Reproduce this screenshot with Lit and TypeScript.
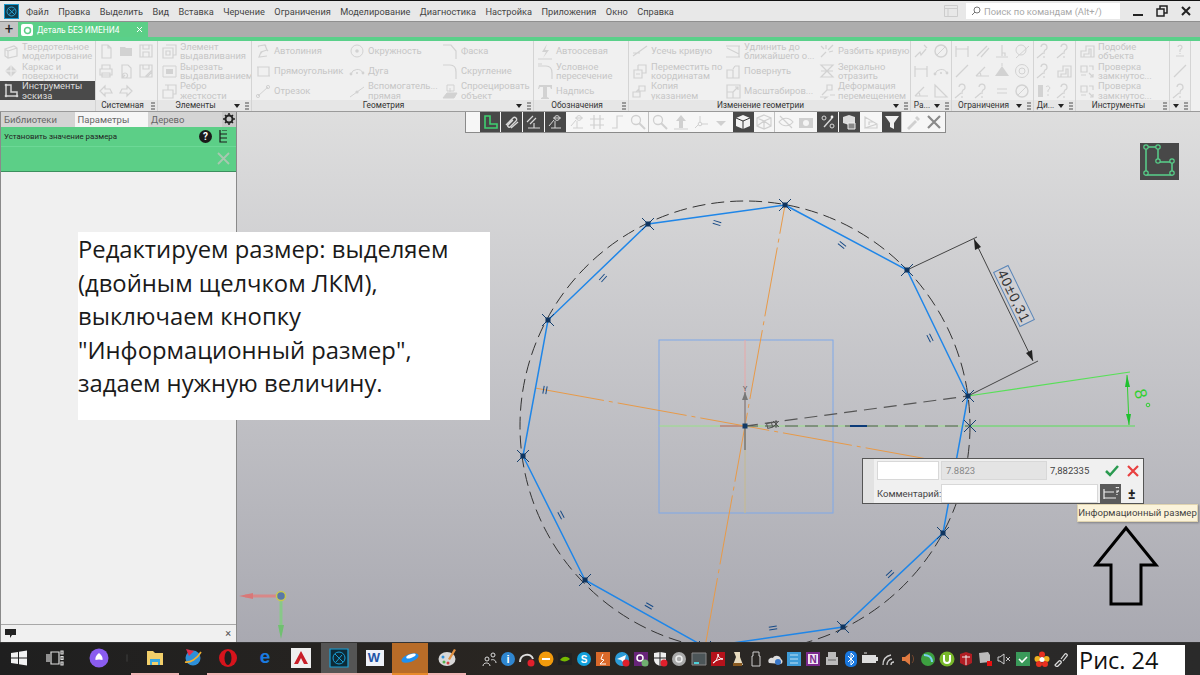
import { css, html, svg, LitElement } from 'lit';
import { customElement } from 'lit/decorators.js';

const st = (d: string) => svg`<path d=${d} fill="none" stroke="currentColor" stroke-width="1.2"/>`;

// faded ribbon icons, 18x18
const ICONS: Record<string, unknown> = {
  cube: st('M3 7l9-3 3 2v8l-9 2-3-2zM3 7l3 2v7M6 9l9-3'),
  frame: svg`<path d="M9 3l6 6-6 6-6-6z" fill="currentColor"/><path d="M9 3v12M3 9h12" stroke="#f0f0f0" fill="none"/>`,
  sketch: svg`<path d="M4 3v11h11v-4h-6v-7z" fill="none" stroke="currentColor" stroke-width="1.5"/><circle cx="4" cy="3" r="1.3" fill="currentColor"/><circle cx="4" cy="14" r="1.3" fill="currentColor"/><circle cx="15" cy="14" r="1.3" fill="currentColor"/>`,
  doc: st('M5 3h6l3 3v10h-9zM11 3v3h3'),
  folder: svg`<path d="M3 5h5l1 1h6v8h-12z" fill="currentColor"/>`,
  save: st('M3 3h12v12h-12zM6 3v4h6v-4M6 15v-5h6v5'),
  print: st('M5 7v-4h8v4M3 7h12v6h-12zM5 11h8v4h-8z'),
  preview: st('M5 3h6l3 3v10h-9zM8 11a2.5 2.5 0 1 0 .1 0M6 15l2-2'),
  saveas: st('M3 3h12v12h-12zM6 3v4h6v-4M9 14l5-5 1 1-5 5z'),
  undo: st('M8 4l-5 5 5 5v-3h7l-2-4h-5z'),
  redo: st('M10 4l5 5-5 5v-3h-7l2-4h5z'),
  extr: st('M6 3h10v10h-3M3 6h10v10h-10zM6 9h4v4h-4z'),
  cut: svg`<path d="M3 4h13v11h-13z" fill="none" stroke="currentColor"/><path d="M6 7h7v5h-7z" fill="currentColor"/>`,
  rib: st('M5 3h11v9h-3M3 8h10v8h-10zM8 8v-5'),
  auto: st('M4 4l7-1 2 5-6 2-2 5 8-1M4 4l1 1M11 3l1 1M13 8l1 1M7 10l1 1'),
  rect: st('M4 5h11v9h-11zM3 5h2M14 14h2'),
  seg: svg`<path d="M4 14l10-9" stroke="currentColor"/><circle cx="4" cy="14" r="1.6" fill="none" stroke="currentColor"/><circle cx="14" cy="5" r="1.6" fill="none" stroke="currentColor"/>`,
  circle: svg`<circle cx="9" cy="9" r="6" fill="none" stroke="currentColor"/><circle cx="9" cy="9" r="1.8" fill="currentColor"/>`,
  arc: svg`<path d="M3 12a6.5 6.5 0 0 1 12-1" fill="none" stroke="currentColor"/><circle cx="3" cy="12" r="1.4" fill="currentColor"/><circle cx="15" cy="11" r="1.4" fill="currentColor"/><circle cx="9" cy="11" r="1" fill="currentColor"/>`,
  aux: svg`<path d="M2 15l14-10" stroke="currentColor"/><circle cx="9" cy="10" r="1.6" fill="currentColor"/>`,
  chamfer: st('M2 3h8l5 6v8'),
  fillet: st('M2 3h7c4 0 6 3 6 7v7'),
  project: svg`<path d="M6 3h7v6h-7z" fill="none" stroke="currentColor"/><path d="M9 6v4M2 16l4-5h10l-3 5z" fill="currentColor" stroke="currentColor"/>`,
  axis: svg`<path d="M11 2l-5 8h4l-3 6 6-8h-4z" fill="currentColor"/><path d="M2 17h14" stroke="currentColor"/>`,
  cross: st('M2 4h8c4 0 6 3 6 7v6M2 2h4'),
  tt: svg`<path d="M3 3h13v4h-1l-1-2h-3v10l2 1v1h-8v-1l2-1v-10h-3l-1 2h-1z" fill="currentColor"/>`,
  trim: st('M2 14l14-10M2 11h7'),
  move: st('M3 8h8v8h-8zM7 3h8v8h-4M7 3v5M5 12h4'),
  copy: st('M2 10h7v5h-7zM8 4h6v5h-6zM5 10l3-3'),
  extend: st('M2 4h14M3 6l12 6M2 15h14M15 4v11'),
  rotate: st('M3 8h6v8h-6zM11 4h4v12h-6M11 4l-2 3'),
  scale: st('M3 3h13v13h-13zM3 10h6v6M9 10l5-5M11 5h3v3'),
  split: st('M3 15l5-5M10 8l5-5M8 3v4M15 9l-4 1M3 4l3 3'),
  mirror: st('M3 3h12l-12 12h12zM3 9h12'),
  deform: st('M2 15h7l-3 2M9 3h5v5h-5zM4 13l5-5M12 13h5'),
  similar: st('M3 15v-6h5v-5h8v11zM6 15v-3h5v-5h2v8'),
  check: st('M3 4h6v6h-6zM11 4h4v4M3 13h5M11 11l4 4M12 15h3v-3'),
  grid1: st('M3 15l5-5 1 3 5-6M12 3l3 3'),
  no: svg`<circle cx="9" cy="9" r="6" fill="none" stroke="currentColor" stroke-width="1.4"/><path d="M5 13l8-8" stroke="currentColor"/>`,
  par: st('M4 14l10-10M8 15l8-9'),
  perp: st('M9 3v11M3 15h12M9 11h3v3'),
  tan: svg`<circle cx="8" cy="8" r="5" fill="none" stroke="currentColor"/><path d="M3 16l13-12" stroke="currentColor"/>`,
  line: st('M3 15l12-12'),
  angle: st('M3 14h13M3 14l9-9M8 14a5 5 0 0 0-2-4'),
  hatch: svg`<path d="M9 4l7 10h-14z" fill="currentColor"/><path d="M9 1v3" stroke="currentColor"/>`,
  conc: svg`<circle cx="9" cy="9" r="6.5" fill="none" stroke="currentColor"/><circle cx="9" cy="9" r="3" fill="none" stroke="currentColor"/>`,
  eq: st('M4 7h10M4 11h10'),
  tri: st('M3 15v-12l12 12z'),
  qu: st('M6 5a3 3 0 1 1 4 3l-1 2v2M9 14v2M2 16l6-5'),
  dim: st('M3 4v11M15 4v11M3 7h12'),
  bars: svg`<path d="M3 3h5v12h-5z" fill="currentColor"/><path d="M11 5a2 2 0 1 1 2 3v2M13 12v2" fill="none" stroke="currentColor"/>`,
  ask: st('M5 14h8M7 5a2 2 0 1 1 3 2l-1 1v2M9 11v1'),
};

type Item = { i: string; l?: string[] };
type Section = { w: number; cap?: string; caret?: boolean; grip?: boolean; cols: string; items: Item[] };

const ic = (...names: string[]): Item[] => names.map((i) => ({ i }));

const SECTIONS: Section[] = [
  { w: 96, cols: '95px', items: [
    { i: 'cube', l: ['Твердотельное', 'моделирование'] },
    { i: 'frame', l: ['Каркас и', 'поверхности'] },
  ] },
  { w: 62, cap: 'Системная', grip: true, cols: 'repeat(3, 20px)', items: ic('doc', 'print', 'undo', 'folder', 'preview', 'redo', 'save', 'saveas') },
  { w: 94, cap: 'Элементы', caret: true, grip: true, cols: '93px', items: [
    { i: 'extr', l: ['Элемент', 'выдавливания'] },
    { i: 'cut', l: ['Вырезать', 'выдавливанием'] },
    { i: 'rib', l: ['Ребро', 'жесткости'] },
  ] },
  { w: 282, cap: 'Геометрия', caret: true, grip: true, cols: '94px 93px 94px', items: [
    { i: 'auto', l: ['Автолиния'] }, { i: 'rect', l: ['Прямоугольник'] }, { i: 'seg', l: ['Отрезок'] },
    { i: 'circle', l: ['Окружность'] }, { i: 'arc', l: ['Дуга'] }, { i: 'aux', l: ['Вспомогатель...', 'прямая'] },
    { i: 'chamfer', l: ['Фаска'] }, { i: 'fillet', l: ['Скругление'] }, { i: 'project', l: ['Спроецировать', 'объект'] },
  ] },
  { w: 95, cap: 'Обозначения', grip: true, cols: '94px', items: [
    { i: 'axis', l: ['Автоосевая'] }, { i: 'cross', l: ['Условное', 'пересечение'] }, { i: 'tt', l: ['Надпись'] },
  ] },
  { w: 282, cap: 'Изменение геометрии', caret: true, grip: true, cols: '93px 94px 94px', items: [
    { i: 'trim', l: ['Усечь кривую'] }, { i: 'move', l: ['Переместить по', 'координатам'] }, { i: 'copy', l: ['Копия', 'указанием'] },
    { i: 'extend', l: ['Удлинить до', 'ближайшего о...'] }, { i: 'rotate', l: ['Повернуть'] }, { i: 'scale', l: ['Масштабиров...'] },
    { i: 'split', l: ['Разбить кривую'] }, { i: 'mirror', l: ['Зеркально', 'отразить'] }, { i: 'deform', l: ['Деформация', 'перемещением'] },
  ] },
  { w: 41, cap: 'Ра...', caret: true, grip: true, cols: 'repeat(2, 20px)', items: ic('grid1', 'dim', 'angle', 'no', 'arc', 'tri') },
  { w: 82, cap: 'Ограничения', caret: true, grip: true, cols: 'repeat(4, 20px)', items: ic('dim', 'line', 'qu', 'par', 'angle', 'qu', 'perp', 'hatch', 'eq', 'tan', 'conc', 'no') },
  { w: 42, cap: 'Ди...', caret: true, grip: true, cols: 'repeat(2, 20px)', items: ic('qu', 'qu', 'bars', 'qu', 'similar', 'qu') },
  { w: 94, cap: 'Инструменты', grip: true, cols: '93px', items: [
    { i: 'similar', l: ['Подобие', 'объекта'] }, { i: 'check', l: ['Проверка', 'замкнутос...'] }, { i: 'check', l: ['Проверка', 'замкнутос...'] },
  ] },
  { w: 21, caret: true, grip: true, cols: '20px', items: ic('ask', 'line', 'qu') },
];

const MENU = ['Файл', 'Правка', 'Выделить', 'Вид', 'Вставка', 'Черчение', 'Ограничения', 'Моделирование', 'Диагностика', 'Настройка', 'Приложения', 'Окно', 'Справка'];

// floating view toolbar; d = dark pressed button
const TB: { k: string; d?: boolean; sep?: boolean; g?: boolean }[] = [
  { k: 'sketch', d: true, g: true }, { k: 'clip', d: true }, { k: 'par', d: true }, { k: 'eye', d: true },
  { k: 'eye' }, { k: 'mesh' }, { k: 'step' }, { k: 'zoom', sep: true },
  { k: 'zoom' }, { k: 'up' }, { k: 'axes' }, { k: 'caret' },
  { k: 'box', d: true }, { k: 'wire', sep: true },
  { k: 'hide' }, { k: 'cam' }, { k: 'nodes', d: true }, { k: 'boxes', d: true }, { k: 'fade' },
  { k: 'funnel', d: true, sep: true }, { k: 'pip' }, { k: 'x' },
];

const TBI: Record<string, unknown> = {
  sketch: svg`<path d="M4 3v12h12v-4h-7v-8z" fill="none" stroke="currentColor" stroke-width="1.6"/>`,
  clip: svg`<path d="M3 12l7-7c2-2 5 1 3 3l-6 6c-1 1-3-1-2-2l5-5M8 15l7-6" fill="none" stroke="currentColor" stroke-width="1.4"/>`,
  par: st('M3 9l6-6M6 11l6-6M4 15h12M10 15v-5'),
  eye: svg`<circle cx="11" cy="5" r="2.4" fill="none" stroke="currentColor"/><path d="M7 5l8 0M3 13l5-6M5 15h10M9 8v7" fill="none" stroke="currentColor"/>`,
  mesh: st('M6 2v14M12 2v14M2 6h14M2 12h14'),
  step: st('M3 15h5v-12h6'),
  zoom: svg`<circle cx="7" cy="7" r="4.5" fill="none" stroke="currentColor" stroke-width="1.3"/><path d="M10 10l6 6" stroke="currentColor" stroke-width="2"/>`,
  up: svg`<path d="M9 2l5 6h-3v7h-4v-7h-3z" fill="currentColor"/><path d="M2 16h14" stroke="currentColor"/>`,
  axes: svg`<circle cx="8" cy="11" r="1.8" fill="none" stroke="currentColor"/><path d="M8 9v-6M10 11h6M6 12l-3 3" stroke="currentColor"/>`,
  caret: svg`<path d="M3 8h10l-5 5z" fill="currentColor"/>`,
  box: svg`<path d="M9 2l7 3v8l-7 3-7-3v-8z" fill="#f4f4f4"/><path d="M2 5l7 3 7-3M9 8v8" fill="none" stroke="#333"/>`,
  wire: st('M9 2l7 3v8l-7 3-7-3v-8zM2 5l7 3 7-3M9 8v8M2 13l7-5 7 5'),
  hide: st('M2 9c4-5 10-5 14 0-4 5-10 5-14 0zM3 3l12 12'),
  cam: svg`<path d="M2 5h14v10h-14z" fill="currentColor"/><circle cx="9" cy="10" r="3" fill="#f5f5f5"/>`,
  nodes: svg`<circle cx="5" cy="5" r="2" fill="none" stroke="currentColor"/><circle cx="13" cy="13" r="2" fill="none" stroke="currentColor"/><path d="M5 14l8-9" stroke="currentColor" stroke-width="1.4"/><circle cx="13" cy="4" r="1.4" fill="#f4f4f4"/>`,
  boxes: svg`<path d="M3 4l6-2 6 2v6l-6 2-6-2z" fill="#ddd"/><path d="M8 10h7v6h-7z" fill="#888" stroke="#eee"/>`,
  fade: st('M3 15v-11l12 7zM3 15h12v-4M7 12v-3h4'),
  funnel: svg`<path d="M2 3h14l-5 7v6l-4-2v-4z" fill="#f0f0f0"/>`,
  pip: svg`<path d="M3 15l8-8 2 2-8 8zM11 5l2-2 3 3-2 2z" fill="currentColor"/>`,
  x: svg`<path d="M3 3l12 12M15 3l-12 12" stroke="#8a8a8a" stroke-width="2.2"/>`,
};

const c = (x: number, r: number, f: string) => svg`<circle cx=${x} cy="10" r=${r} fill=${f}/>`;

// bar: colour of the "running" underline
const APPS: { w: number; bg?: string; on?: boolean; bar?: string; s: unknown }[] = [
  { w: 37, s: svg`<path d="M2 5l7-1v5.500h-7zM10 3.800l8-1.200v7h-8zM2 10.500h7v5.500l-7-1zM10 10.500h8v7l-8-1.200z" fill="#f2f2f2"/>` },
  { w: 38, s: svg`<path d="M5 4h8v12h-8zM1 6v8M3 6v8M15 3h2v3h-2zM15 8.500h2v3h-2zM15 14h2v3h-2z" fill="none" stroke="#ddd" stroke-width="1.200"/>` },
  { w: 48, s: svg`${c(10, 9.5, '#8a5cf0')}<path d="M10 5c3 2 4 5 3.500 7-2-.7-5-.7-7 0-.5-2 .5-5 3.500-7z" fill="#fff"/>` },
  { w: 8, s: svg`<path d="M10 1v18" stroke="#555" stroke-width="1.500"/>` },
  { w: 48, bar: '#f0b4b4', s: svg`<path d="M2 3h6l2 2h8v12h-16z" fill="#f2cf6a"/><path d="M5 11h10v6h-2v-3h-6v3h-2z" fill="#38a8e0"/>` },
  { w: 28, s: svg`${c(10, 7.5, '#2d8fd8')}<path d="M2 14c5 1 12-3 16-10" fill="none" stroke="#f0b030" stroke-width="1.600"/><path d="M3 1l8 2-5 5z" fill="#e03050"/>` },
  { w: 42, bar: '#f0b4b4', s: svg`${c(10, 9, '#d6141c')}<ellipse cx="10" cy="10" rx="3.500" ry="7" fill="#1f1f1f"/>` },
  { w: 32, bar: '#f0b4b4', s: svg`<text x="10" y="15" text-anchor="middle" font-size="19" font-weight="700" font-family="Liberation Sans" fill="#1a7be0">e</text>` },
  { w: 40, bar: '#f0b4b4', s: svg`<path d="M0 0h20v20h-20z" fill="#eee"/><path d="M10 3l7 13h-4l-3-6-3 6h-4z" fill="#c81e28"/>` },
  { w: 36, on: true, bar: '#f0b4b4', s: svg`<path d="M1 1h18v18h-18z" fill="#0d2a36" stroke="#19a0d8" stroke-width="1.200"/><circle cx="10" cy="10" r="6" fill="none" stroke="#19a0d8"/><path d="M6 6l8 8M7 14l6-7" stroke="#19a0d8"/>` },
  { w: 35, bar: '#f0b4b4', s: svg`<path d="M1 2h18v16h-18z" fill="#eef2fa"/><text x="9" y="14" text-anchor="middle" font-size="13" font-weight="700" font-family="Liberation Sans" fill="#1f55a8">W</text>` },
  { w: 36, bg: '#b86c28', bar: '#e88a2a', s: svg`<ellipse cx="10" cy="10" rx="9" ry="4" transform="rotate(-20 10 10)" fill="#1e90f0"/><ellipse cx="11" cy="8" rx="5" ry="1.800" transform="rotate(-20 11 8)" fill="#fff"/>` },
  { w: 38, bar: '#f0b4b4', s: svg`<ellipse cx="10" cy="11" rx="8.500" ry="7" fill="#d8d8d8"/><path d="M11 11l6-10 2 1-6 10z" fill="#e09040"/><circle cx="6" cy="9" r="1.500" fill="#3090d8"/><circle cx="7" cy="14" r="1.500" fill="#50b050"/><circle cx="11" cy="15" r="1.500" fill="#d04040"/>` },
];

const t = (txt: string, f: string, s = 10) => svg`<text x="8" y="12" text-anchor="middle" font-size=${s} font-weight="700" font-family="Liberation Sans" fill=${f}>${txt}</text>`;
const dot = (f: string, r = 7) => svg`<circle cx="8" cy="8" r=${r} fill=${f}/>`;
const redb = svg`<circle cx="12" cy="12" r="3.500" fill="#e0202c"/>`;

const TRAY: unknown[] = [
  svg`<circle cx="6" cy="8" r="2" fill="none" stroke="#ddd"/><circle cx="12" cy="4" r="2" fill="none" stroke="#ddd"/><path d="M2 15c0-4 7-4 7 0M10 9c2-1 5 0 5 3" fill="none" stroke="#ddd"/>`,
  svg`${dot('#2f86d0')}${t('i', '#fff', 11)}`,
  svg`<path d="M1 11c0-8 11-10 13-3" fill="none" stroke="#ddd" stroke-width="2"/>${redb}`,
  svg`${dot('#f29a0c', 7.500)}<path d="M4 8h8" stroke="#fff" stroke-width="2"/>`,
  svg`<path d="M1 2h14v12h-14z" fill="#222"/><path d="M3 9c3-4 7-4 10-1-3 3-7 3-10 1z" fill="#76b900"/>`,
  svg`${dot('#11a0dc')}${t('S', '#fff', 10)}`,
  svg`<path d="M1 1h14v14h-14z" fill="#d9692a"/><path d="M8 3l-2 5 3 1-4 4h6" fill="none" stroke="#fff"/>`,
  svg`${dot('#2c9cd8')}<path d="M3 8l9-4-2 8-3-3z" fill="#fff"/>${redb}`,
  svg`<path d="M1 1h14v14h-14z" fill="#68257a"/><circle cx="7" cy="7" r="3" fill="none" stroke="#fff" stroke-width="1.500"/><circle cx="12" cy="12" r="3.500" fill="#70b070"/>`,
  svg`<path d="M2 2l6-1 6 1v6c0 4-3 6-6 7-3-1-6-3-6-7z" fill="#eee"/><path d="M8 1v14M2 7h12" stroke="#222"/>${redb}`,
  svg`${dot('#aaa')}<circle cx="8" cy="8" r="3" fill="none" stroke="#eee" stroke-width="1.500"/>`,
  svg`<path d="M1 2h14v12h-14z" fill="#4c5558" stroke="#888"/><path d="M3 11h5v2h-5z" fill="#4fd0d8"/>`,
  svg`<path d="M1 1h14v14h-14z" fill="#b5121b"/><path d="M3 12c3-1 5-6 5-9 0 3 2 5 5 5-3 0-7 1-10 4z" fill="none" stroke="#fff"/>`,
  svg`<path d="M5 1h6v5l3 8h-10l3-8z" fill="#e8dcc0"/><path d="M4 12h9v3h-9z" fill="#8a5a20"/>`,
  svg`<path d="M5 1h6v4h1v10h-8v-10h1z" fill="none" stroke="#ccc"/>`,
  svg`<path d="M2 12c-2-3 1-6 4-5 1-3 7-3 8 1 2 1 2 4 0 5z" fill="#ddd"/><circle cx="11" cy="11" r="3" fill="#3a78c8"/>`,
  svg`<path d="M1 1h14v14h-14z" fill="#3e9cd8"/><path d="M4 4h8M4 8h8M4 12h8" stroke="#bfe0f4"/>`,
  svg`<path d="M1 1h14v14h-14z" fill="#7b2a8e"/><path d="M3 3h10v10h-10z" fill="#f2e6f4"/>${t('N', '#7b2a8e', 10)}`,
  svg`<path d="M4 1h8v5h2v8h-12v-8h2z" fill="#bbb"/><path d="M4 9h8" stroke="#666"/>`,
  svg`<rect x="2" y="0" width="12" height="16" rx="5" fill="#1978e0"/><path d="M5 5l6 6-3 3v-12l3 3-6 6" fill="none" stroke="#fff"/>`,
  svg`<path d="M0 4h14v8h-14z" fill="#ddd"/><path d="M14 6h2v4h-2z" fill="#ddd"/><path d="M2 2h3" stroke="#ddd"/>`,
  svg`<path d="M1 14c0-5 3-9 8-10M5 14c0-3 2-6 5-6M9 14c0-2 1-3 3-3" fill="none" stroke="#ccc" stroke-width="1.300"/>`,
  svg`<path d="M1 6h3l5-4v12l-5-4h-3z" fill="#e07a40"/><path d="M11 4c2 2 2 6 0 8" fill="none" stroke="#7a4a30"/>`,
  svg`${dot('#3da040')}<path d="M4 4c4 0 8 2 8 7" fill="none" stroke="#7cd0f0" stroke-width="2"/>`,
  svg`${dot('#78b82a', 7.500)}<path d="M5 4v5a3 3 0 0 0 6 0v-5" fill="none" stroke="#fff" stroke-width="2"/>`,
  svg`<path d="M2 3l6-2 6 2v9l-6 3-6-3z" fill="#b01e24"/><path d="M8 4v10M4 6h8" stroke="#eee"/>`,
  svg`<path d="M2 2l9-1 2 3v7l-10 1z" fill="#bbb"/><path d="M10 10h5v5h-5z" fill="#e81010"/>`,
  svg`<path d="M2 6h2l4-3v10l-4-3h-2zM10 6l4 4M14 6l-4 4" fill="none" stroke="#ccc"/>`,
  svg`<path d="M1 1h14v14h-14z" fill="#3a9a5a"/><path d="M4 8l3 3 5-5" fill="none" stroke="#fff" stroke-width="1.600"/>`,
  svg`<circle cx="8" cy="3.500" r="3" fill="#e83020"/><circle cx="3.500" cy="8" r="3" fill="#f0b020"/><circle cx="12.500" cy="8" r="3" fill="#f0b020"/><circle cx="5" cy="13" r="3" fill="#e83020"/><circle cx="11" cy="13" r="3" fill="#e83020"/><circle cx="8" cy="8.500" r="2.500" fill="#fff"/>`,
  svg`<path d="M2 14l4-4c1-1 3 1 2 2l-3 3c-1 1-3 0-3-1zM8 8l4-5c1-1 3 1 2 2l-4 5" fill="none" stroke="#ddd" stroke-width="1.200"/>`,
];

// sketch data in page coordinates
const VERTS = [[785, 205], [907, 270], [968, 396], [943, 533], [843, 627], [705, 647], [585, 580], [523, 456], [548, 320], [648, 224]];
const MARKS = [[717, 223, 17], [842, 245, 38], [930, 338, 63], [890, 574, -42], [773, 628, -9], [649, 606, 30], [561, 515, 62], [545, 390, 100], [603, 278, -48]];

@customElement('app-root')
export class AppRoot extends LitElement {
  static styles = css`
    :host {
      display: flex;
      flex-direction: column;
      width: 1200px;
      height: 675px;
      overflow: hidden;
      background: #222;
      font-family: Roboto, 'Noto Sans', sans-serif;
      color: #333;
    }
    svg { display: block; }

    .menubar {
      display: flex;
      align-items: center;
      height: 22px;
      box-sizing: border-box;
      border-top: 1px solid #111;
      border-bottom: 1px solid #8f8f8f;
      background: #e8e8e8;
      font-size: 9.2px;
      color: #444;
    }
    .logo {
      width: 15px;
      height: 15px;
      margin: 0 7px 0 4px;
      background: #12394a;
      border: 1px solid #1a9bd0;
      box-sizing: border-box;
      color: #28a0d0;
    }
    .menu { display: flex; gap: 9.5px; }
    .right { margin-left: auto; margin-right: 2px; display: flex; align-items: center; }
    .search {
      width: 154px;
      height: 16px;
      margin: 0 6px 0 8px;
      background: #fff;
      display: flex;
      align-items: center;
      gap: 3px;
      padding-left: 5px;
      box-sizing: border-box;
      color: #a8a8a8;
      font-size: 9.4px;
    }
    .win { width: 24px; display: flex; justify-content: center; color: #222; }

    .tabbar { display: flex; height: 15px; background: #adadad; }
    .plus {
      width: 18px;
      background: #c4c4c4;
      font-size: 15px;
      line-height: 14px;
      text-align: center;
      color: #222;
    }
    .doc {
      width: 130px;
      background: #5ccf87;
      color: #fff;
      font-size: 8.4px;
      display: flex;
      align-items: center;
      gap: 4px;
      padding: 0 5px 0 3px;
      box-sizing: border-box;
    }
    .doc span { flex: 1; }
    .accent { height: 4px; background: #5ad08a; }

    .ribbon {
      display: flex;
      height: 71px;
      background: #f0f0f0;
      border-bottom: 1px solid #9a9a9a;
      box-sizing: border-box;
    }
    .sec {
      flex: none;
      display: flex;
      flex-direction: column;
      box-sizing: border-box;
      border-right: 1px solid #d4d4d4;
    }
    .sec-body {
      flex: 1;
      display: grid;
      grid-template-rows: 20px 20px 19px;
      grid-auto-flow: column;
      overflow: hidden;
    }
    .cap {
      height: 11px;
      background: #e6e6e6;
      display: flex;
      align-items: center;
      justify-content: center;
      position: relative;
      padding-right: 8px;
      font-size: 8.3px;
      line-height: 11px;
      color: #333;
      white-space: nowrap;
    }
    .cap.more { padding-right: 18px; }
    .cap .tools {
      position: absolute;
      right: 2px;
      top: 2px;
      display: flex;
      gap: 5px;
      align-items: center;
    }
    .caret {
      width: 0;
      height: 0;
      border: 3.5px solid transparent;
      border-top: 4px solid #222;
      border-bottom: 0;
    }
    .grip {
      width: 4px;
      height: 8px;
      background: repeating-linear-gradient(#999 0 2px, transparent 2px 3px);
    }
    .item {
      display: flex;
      align-items: center;
      gap: 2px;
      padding-left: 2px;
      color: #c6c6c6;
      font-size: 9.4px;
      line-height: 9.5px;
      white-space: nowrap;
      min-width: 0;
    }
    .item.solo { justify-content: center; padding: 0; }
    .item svg { flex: none; color: #d2d2d2; }
    .item.on {
      background: #4a4a4a;
      color: #dcdcdc;
      margin-right: -1px;
    }

    .main { flex: 1; display: flex; position: relative; min-height: 0; }
    .panel {
      width: 236px;
      flex: none;
      display: flex;
      flex-direction: column;
      background: #f0f0f0;
      border-left: 1px solid #8a8a8a;
      box-sizing: border-box;
    }
    .tabs { display: flex; height: 15px; background: #d4d4d4; font-size: 9.5px; line-height: 15px; color: #666; }
    .tabs div { width: 73.5px; padding-left: 3px; box-sizing: border-box; }
    .tabs .cur { background: #f6f6f6; }
    .tabs .gear { width: 14px; padding: 0; background: #c8c8c8; color: #222; }
    .task { background: #5ccf87; height: 45px; border-bottom: 1px solid #3c8f5e; box-sizing: border-box; }
    .task-top {
      height: 19px;
      display: flex;
      align-items: center;
      gap: 7px;
      padding: 0 8px 0 3px;
      font-size: 7.9px;
      color: #222;
      border-bottom: 1px solid #6cd896;
    }
    .task-top span { flex: 1; }
    .help {
      width: 13px;
      height: 13px;
      border-radius: 50%;
      background: #1a1a1a;
      color: #fff;
      font-size: 10px;
      font-weight: 700;
      line-height: 13px;
      text-align: center;
    }
    .task-bot { display: flex; justify-content: flex-end; padding: 5px 6px 0 0; }
    .fill { flex: 1; }
    .note {
      height: 17px;
      border-top: 1px solid #a8a8a8;
      display: flex;
      align-items: center;
      justify-content: space-between;
      padding: 0 5px 0 4px;
      font-size: 11px;
      color: #555;
    }

    .canvas {
      flex: 1;
      position: relative;
      overflow: hidden;
      background: linear-gradient(#dedede, #a9a9b1);
      border-left: 1px solid #8a8a8a;
    }
    .view { width: 964px; height: 530px; }

    .viewbar {
      position: absolute;
      left: 228px;
      top: 0;
      height: 21px;
      display: flex;
      align-items: stretch;
      background: #f6f6f6;
      border: 1px solid #8a8a8a;
      border-top: 0;
      box-sizing: border-box;
      color: #d0d0d0;
    }
    .vb-grip {
      width: 13px;
      margin: 1px 0;
      background: radial-gradient(#888 35%, transparent 40%) 0 0 / 2px 2px;
      height: 4px;
    }
    .vb {
      width: 20.8px;
      display: flex;
      align-items: center;
      justify-content: center;
      box-sizing: border-box;
    }
    .vb.dark { background: #484848; color: #d8d8d8; margin: 0 .5px; }
    .vb.green { color: #3fd070; }
    .vb.sep { border-right: 1px solid #c0c0c0; }

    .dialog {
      position: absolute;
      left: 625px;
      top: 346px;
      width: 282px;
      height: 46px;
      background: #f0f0f0;
      border: 1px solid #555;
      box-sizing: border-box;
      display: grid;
      grid-template-columns: 62px 106px 1fr;
      grid-template-rows: 21px 21px;
      gap: 2px;
      padding: 1px 4px 0 14px;
      font-size: 9.5px;
      color: #444;
    }
    .dialog::before {
      content: '';
      position: absolute;
      left: 0;
      top: 0;
      bottom: 0;
      width: 11px;
      background: #e2e2e2;
    }
    .field { background: #fff; border: 1px solid #d8d8d8; box-sizing: border-box; height: 19px; margin-top: 1px; }
    .field.off { background: #e4e4e4; color: #888; padding-left: 4px; line-height: 17px; }
    .val { display: flex; align-items: center; gap: 8px; padding-left: 1px; }
    .val span { flex: 1; }
    .lbl { line-height: 21px; white-space: nowrap; }
    .row2 { display: flex; align-items: center; gap: 2px; grid-column: 2 / 4; }
    .row2 .field { width: 157px; margin: 0; }
    .info {
      width: 21px;
      height: 20px;
      background: #5a5a5a;
      color: #eee;
      display: flex;
      align-items: center;
      justify-content: center;
    }
    .pm { margin-left: 5px; font-size: 14px; font-weight: 700; color: #222; }

    .tip {
      position: absolute;
      left: 840px;
      top: 392px;
      width: 121px;
      height: 18px;
      background: #fbf3da;
      border: 1px solid #e0d4b0;
      box-shadow: 1px 1px 2px rgba(0, 0, 0, 0.3);
      box-sizing: border-box;
      font-size: 9.6px;
      line-height: 16px;
      text-align: center;
      color: #444;
      white-space: nowrap;
    }

    .caption {
      position: absolute;
      left: 78px;
      top: 120px;
      width: 412px;
      height: 188px;
      background: #fff;
      box-sizing: border-box;
      padding: 1px 0 0 0;
      font-family: 'Open Sans', sans-serif;
      font-size: 23.8px;
      line-height: 33.5px;
      color: #1a1a1a;
      white-space: nowrap;
    }

    .taskbar {
      height: 33px;
      flex: none;
      display: flex;
      position: relative;
      background: linear-gradient(90deg, #1f1f1f, #2a2622 45%, #2a2a2a);
      border-top: 1px solid #333;
      box-sizing: border-box;
    }
    .apps { display: flex; flex: none; width: 479px; }
    .app {
      flex: none;
      display: flex;
      align-items: center;
      justify-content: center;
      height: 100%;
      box-sizing: border-box;
      border-bottom: 2px solid transparent;
    }
    .app.on { background: #555; }
    .tray { display: flex; flex: none; align-items: center; }
    .tray div { width: 19.1px; display: flex; justify-content: center; }
    .fig {
      position: absolute;
      left: 1077px;
      top: 2px;
      width: 108px;
      height: 30px;
      background: #fff;
      color: #111;
      font-family: 'Open Sans', sans-serif;
      font-size: 23.5px;
      line-height: 30px;
      padding-left: 2px;
      box-sizing: border-box;
      white-space: nowrap;
    }
  `;

  private sec(s: Section, first: boolean) {
    return html`<div class="sec" style="width:${s.w}px">
      <div class="sec-body" style="grid-template-columns:${s.cols}">
        ${s.items.map(
          (it) => html`<div class="item ${it.l ? '' : 'solo'}">
            <svg width="18" height="18" viewBox="0 0 18 18">${ICONS[it.i]}</svg>
            ${it.l ? html`<div>${it.l.map((x) => html`<div>${x}</div>`)}</div>` : ''}
          </div>`,
        )}
        ${first
          ? html`<div class="item on">
              <svg width="18" height="18" viewBox="0 0 18 18">${ICONS.sketch}</svg>
              <div><div>Инструменты</div><div>эскиза</div></div>
            </div>`
          : ''}
      </div>
      <div class="cap ${s.caret ? 'more' : ''}">
        ${s.cap ?? ''}
        <div class="tools">
          ${s.caret ? html`<div class="caret"></div>` : ''}
          ${s.grip ? html`<div class="grip"></div>` : ''}
        </div>
      </div>
    </div>`;
  }

  private drawing() {
    const poly = VERTS.map((p) => p.join(',')).join(' ');
    return svg`
      <rect x="659" y="340" width="174" height="173" fill="none" stroke="#7fa8e8"/>
      <path d="M745 340V513" stroke="#e8a8a8"/>
      <path d="M659 426H745" stroke="#98e088"/>
      <path d="M720 426H745" stroke="#c07878" stroke-width="1.400"/>
      <path d="M745 426V513" stroke="#98d088" opacity=".6"/>
      <path d="M705 647L785 205" stroke="#e89a48" stroke-dasharray="70 5 4 5"/>
      <path d="M535 388L955 464" stroke="#e89a48" stroke-dasharray="70 5 4 5"/>
      <path d="M745 426H970" stroke="#98e088"/>
      <circle cx="745" cy="426" r="225" fill="none" stroke="#333" stroke-dasharray="13 6"/>
      <polygon points=${poly} fill="none" stroke="#1f86e8" stroke-width="1.500"/>
      <path d="M745 426L968 396M745 426H970" stroke="#555" stroke-width="1.200" stroke-dasharray="13 7"/>
      <path d="M850 426H867" stroke="#0c3b78" stroke-width="2"/>
      <path d="M745 392V426" stroke="#888" stroke-width="1.500"/>
      <path d="M745 392l-3 8h6z" fill="#777"/>
      <text x="745" y="391" font-size="7" font-family="Liberation Sans" fill="#555" text-anchor="middle">Y</text>
      <path d="M745 426V450" stroke="#777" stroke-width="1.500"/>
      <rect x="767" y="423" width="5" height="5" fill="none" stroke="#555" transform="rotate(-15 769 425)"/>
      <path d="M773 421l6 6M779 421l-6 6M776 420v8" stroke="#444" stroke-width=".8"/>

      <path d="M907 270L977 237M968 396L1038 361" stroke="#444"/>
      <path d="M974 239L1033 361" stroke="#444"/>
      <path d="M974 239l1 11 6-3zM1033 361l-7-8 6-3z" fill="#222"/>
      <g transform="translate(1014 296) rotate(64)">
        <rect x="-30" y="-8" width="60" height="16" fill="#d0d0d4" stroke="#5a86b8"/>
        <text x="0" y="5" text-anchor="middle" font-size="14" letter-spacing=".9" font-family="Liberation Sans" fill="#333">40±0,31</text>
      </g>

      <path d="M968 396L1130 372M970 426H1135" stroke="#58e058" stroke-width="1.200"/>
      <path d="M1127 375L1129 425" stroke="#30d030"/>
      <path d="M1127 375l-2 12 5 0zM1129 425l-3-11 5 0z" fill="#20c030"/>
      <text x="1140" y="399" font-size="17" text-anchor="middle" font-family="Liberation Sans" fill="#30d030" transform="rotate(75 1140 394)">8</text>
      <circle cx="1148" cy="405" r="1.800" fill="none" stroke="#30d030"/>

      ${VERTS.map(
        ([x, y]) => svg`
          <path d="M${x - 6} ${y - 6}L${x + 6} ${y + 6}M${x + 6} ${y - 6}L${x - 6} ${y + 6}" stroke="#16406e"/>
          <rect x=${x - 2.500} y=${y - 2.500} width="5" height="5" fill="#0f3560"/>`,
      )}
      <path d="M745 426m-2.500-2.500h5v5h-5z" fill="#123a66"/>
      <path d="M964 420l12 12M976 420l-12 12" stroke="#16406e"/>
      ${MARKS.map(
        ([x, y, r]) => svg`<path d="M-4 -1.500H4M-4 1.500H4" stroke="#174a86" transform="translate(${x} ${y}) rotate(${r})"/>`,
      )}

      <rect x="1140" y="143" width="39" height="37" fill="#484848"/>
      <path d="M1146 147h12v15h14v13h-26z" fill="none" stroke="#58d08a" stroke-width="1.500"/>
      ${[[1146, 147], [1158, 147], [1158, 161], [1172, 161], [1172, 173], [1146, 173]].map(
        ([x, y]) => svg`<circle cx=${x} cy=${y} r="2.200" fill="#484848" stroke="#58d08a" stroke-width="1.200"/>`,
      )}

      <path d="M1126 528L1156 565H1141V604H1111V565H1096Z" fill="none" stroke="#000" stroke-width="3"/>

      <path d="M281 596H245" stroke="#d88888" stroke-width="3"/>
      <path d="M239 596l14-3v6z" fill="#d87878"/>
      <path d="M281 596V632" stroke="#88c888" stroke-width="3"/>
      <path d="M281 639l-3-14h6z" fill="#70c070"/>
      <circle cx="281" cy="596" r="4.500" fill="#5878a8" stroke="#c8c850" stroke-width="1.500"/>`;
  }

  render() {
    return html`
      <div class="menubar">
        <div class="logo">
          <svg width="13" height="13" viewBox="0 0 13 13"><circle cx="6.500" cy="6.500" r="4.500" fill="none" stroke="currentColor"/><path d="M3 3l7 7M3.500 10l6-6" stroke="currentColor"/></svg>
        </div>
        <div class="menu">${MENU.map((m) => html`<span>${m}</span>`)}</div>
        <div class="right">
          <svg width="14" height="12" viewBox="0 0 14 12"><path d="M.5.500h13v11h-13zM.5 3.500h13M4 3.500v8" fill="none" stroke="#ccc"/></svg>
          <div class="search">
            <svg width="10" height="10" viewBox="0 0 10 10"><circle cx="6" cy="4" r="3" fill="none" stroke="#777"/><path d="M4 6L1 9" stroke="#777"/></svg>
            Поиск по командам (Alt+/)
          </div>
          <div class="win"><svg width="12" height="12" viewBox="0 0 12 12"><path d="M1 10h10" stroke="currentColor" stroke-width="2"/></svg></div>
          <div class="win"><svg width="12" height="12" viewBox="0 0 12 12"><path d="M1 4h7v7h-7zM4 4v-3h7v7h-3" fill="none" stroke="currentColor" stroke-width="1.500"/></svg></div>
          <div class="win"><svg width="12" height="12" viewBox="0 0 12 12"><path d="M2 2l8 8M10 2l-8 8" stroke="currentColor" stroke-width="2"/></svg></div>
        </div>
      </div>
      <div class="tabbar">
        <div class="plus">+</div>
        <div class="doc">
          <svg width="12" height="12" viewBox="0 0 12 12"><rect width="12" height="12" rx="2" fill="#fff"/><circle cx="6.500" cy="6.500" r="3" fill="none" stroke="#5ccf87" stroke-width="1.500"/></svg>
          <span>Деталь БЕЗ ИМЕНИ4</span>
          <svg width="7" height="7" viewBox="0 0 7 7"><path d="M1 1l5 5M6 1l-5 5" stroke="#fff"/></svg>
        </div>
      </div>
      <div class="accent"></div>
      <div class="ribbon">${SECTIONS.map((s, i) => this.sec(s, i === 0))}</div>
      <div class="main">
        <div class="panel">
          <div class="tabs">
            <div>Библиотеки</div>
            <div class="cur">Параметры</div>
            <div>Дерево</div>
            <div class="gear">
              <svg width="14" height="14" viewBox="0 0 14 14"><circle cx="7" cy="7" r="3.500" fill="none" stroke="currentColor" stroke-width="2"/><path d="M7 1v2M7 11v2M1 7h2M11 7h2M3 3l1.500 1.500M9.500 9.500L11 11M11 3L9.500 4.500M4.500 9.500L3 11" stroke="currentColor" stroke-width="1.500"/></svg>
            </div>
          </div>
          <div class="task">
            <div class="task-top">
              <span>Установить значение размера</span>
              <div class="help">?</div>
              <svg width="9" height="13" viewBox="0 0 9 13"><path d="M1 0v12h7M1 4h7M1 8h7M3 0h5" fill="none" stroke="#1a1a1a" stroke-width="1.200"/></svg>
            </div>
            <div class="task-bot">
              <svg width="13" height="13" viewBox="0 0 13 13"><path d="M1 1l11 11M12 1l-11 11" stroke="#a8c8b0" stroke-width="1.800"/></svg>
            </div>
          </div>
          <div class="fill"></div>
          <div class="note">
            <svg width="11" height="10" viewBox="0 0 11 10"><path d="M0 0h11v6h-4l-2 3v-3h-5z" fill="#222"/></svg>
            <span>×</span>
          </div>
        </div>
        <div class="canvas">
          <svg class="view" viewBox="237 112 964 530">${this.drawing()}</svg>
          <div class="viewbar">
            <div class="vb-grip"></div>
            ${TB.map(
              (b) => html`<div class="vb ${b.d ? 'dark' : ''} ${b.g ? 'green' : ''} ${b.sep ? 'sep' : ''}">
                <svg width="18" height="18" viewBox="0 0 18 18">${TBI[b.k]}</svg>
              </div>`,
            )}
          </div>
          <div class="dialog">
            <div class="field"></div>
            <div class="field off">7.8823</div>
            <div class="val">
              <span>7,882335</span>
              <svg width="14" height="12" viewBox="0 0 14 12"><path d="M1 6l4 4 8-9" fill="none" stroke="#2a9a50" stroke-width="2.500"/></svg>
              <svg width="12" height="12" viewBox="0 0 12 12"><path d="M1 1l10 10M11 1l-10 10" stroke="#e84040" stroke-width="2.200"/></svg>
            </div>
            <div class="lbl">Комментарий:</div>
            <div class="row2">
              <div class="field"></div>
              <div class="info">
                <svg width="16" height="14" viewBox="0 0 16 14"><path d="M1 2v10M1 5h10M1 11h12M13 1a2 2 0 1 1 1 3v2M14 7v1" fill="none" stroke="currentColor" stroke-width="1.200"/></svg>
              </div>
              <span class="pm">±</span>
            </div>
          </div>
          <div class="tip">Информационный размер</div>
        </div>
        <div class="caption">
          <div>Редактируем размер: выделяем</div>
          <div>(двойным щелчком ЛКМ),</div>
          <div>выключаем кнопку</div>
          <div>"Информационный размер",</div>
          <div>задаем нужную величину.</div>
        </div>
      </div>
      <div class="taskbar">
        <div class="apps">
          ${APPS.map(
            (a) => html`<div
              class="app ${a.on ? 'on' : ''}"
              style="width:${a.w}px;${a.bg ? `background:${a.bg};` : ''}${a.bar ? `border-bottom-color:${a.bar}` : ''}"
            >
              <svg width="20" height="20" viewBox="0 0 20 20">${a.s}</svg>
            </div>`,
          )}
        </div>
        <div class="tray">
          ${TRAY.map((s) => html`<div><svg width="16" height="16" viewBox="0 0 16 16">${s}</svg></div>`)}
        </div>
        <div class="fig">Рис. 24</div>
      </div>
    `;
  }
}
